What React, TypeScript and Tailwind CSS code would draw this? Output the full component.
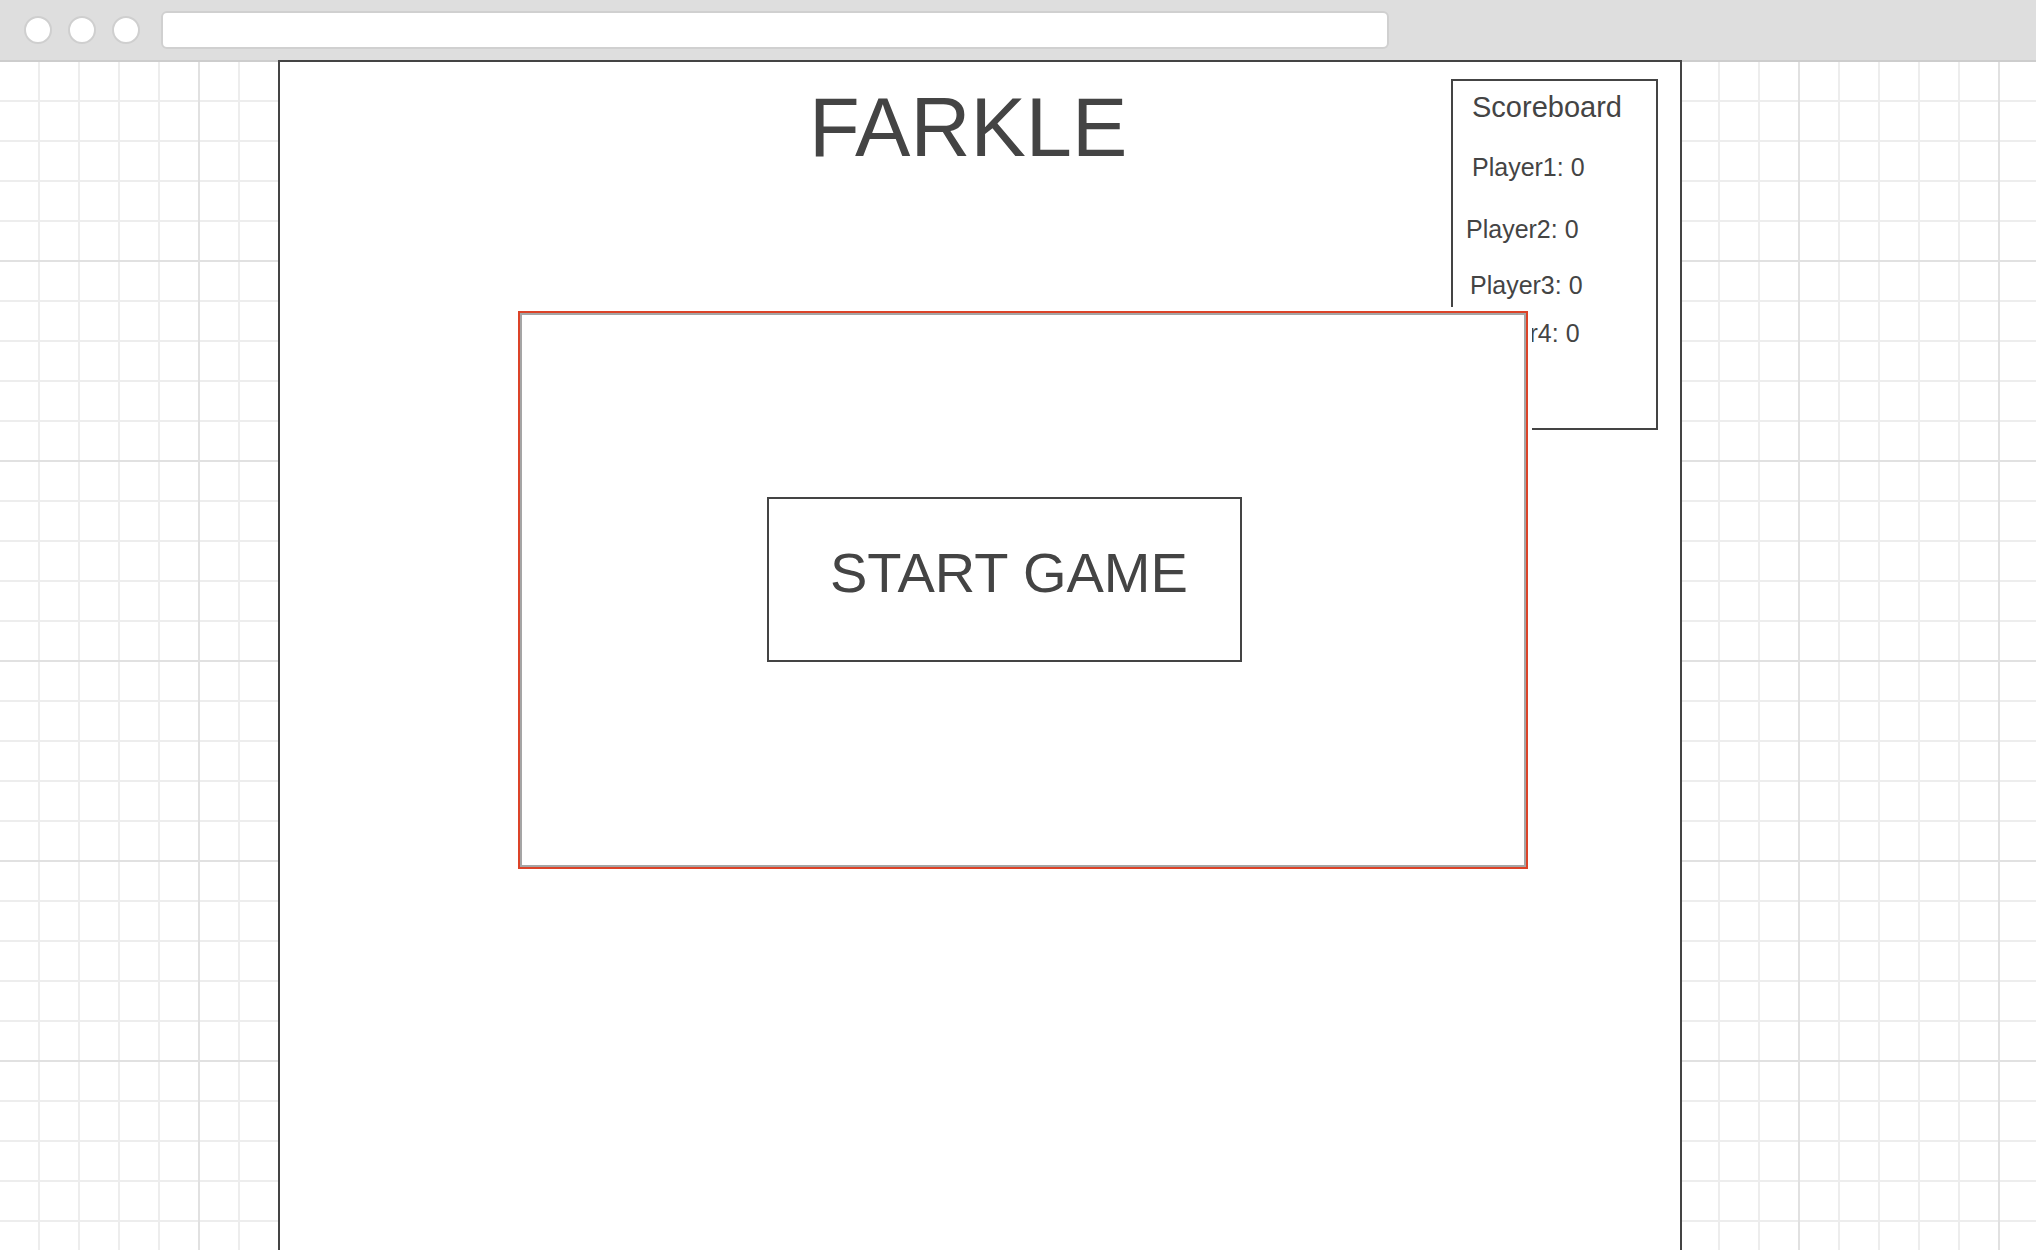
export default function App() {
  const players = [
    { name: "Player1", score: 0, cls: "mt-[33px] pl-[19px]" },
    { name: "Player2", score: 0, cls: "mt-[37px] pl-[13px]" },
    { name: "Player3", score: 0, cls: "mt-[31px] pl-[17px]" },
    { name: "Player4", score: 0, cls: "mt-[23px] pl-[14px]" },
  ];

  return (
    <div className="h-screen w-full overflow-hidden flex flex-col font-['Liberation_Sans',Arial,sans-serif] text-[#444]">
      {/* browser chrome */}
      <div className="h-[60px] shrink-0 flex items-center bg-[#dedede] pl-[24px]">
        <div className="flex gap-4">
          <div className="w-[28px] h-[28px] rounded-full bg-white border-2 border-[#cfcfcf]" />
          <div className="w-[28px] h-[28px] rounded-full bg-white border-2 border-[#cfcfcf]" />
          <div className="w-[28px] h-[28px] rounded-full bg-white border-2 border-[#cfcfcf]" />
        </div>
        <div className="ml-[21px] w-[1228px] h-[38px] rounded-md bg-white border-2 border-[#d0d0d0]" />
      </div>

      {/* grid canvas */}
      <div className="flex-1 flex border-t-2 border-[#cdcdcd] bg-white bg-[linear-gradient(to_right,transparent_198px,#e1e1e1_198px),linear-gradient(to_bottom,transparent_198px,#e1e1e1_198px),linear-gradient(to_right,transparent_38px,#ededed_38px),linear-gradient(to_bottom,transparent_38px,#ededed_38px)] bg-[length:200px_200px,200px_200px,40px_40px,40px_40px]">
        <div className="relative ml-[278px] -mt-[2px] w-[1404px] h-[1300px] shrink-0 border-2 border-[#444] bg-white pt-[24px]">
          <h1 className="ml-[529px] w-fit text-[83px] leading-none font-normal">FARKLE</h1>

          <div className="absolute left-[1171px] top-[17px] w-[207px] h-[351px] border-2 border-[#444] bg-white pt-[12px]">
            <div className="pl-[19px] text-[29px] leading-none">Scoreboard</div>
            {players.map((p) => (
              <div key={p.name} className={`text-[25px] leading-none ${p.cls}`}>
                {p.name}: {p.score}
              </div>
            ))}
          </div>

          <div className="relative z-10 ml-[238px] mt-[142px] w-[1010px] h-[558px] border-2 border-[#dc4328] bg-white shadow-[inset_0_0_0_2px_#a5a5a5,0_0_0_4px_#ffffff]">
            <div className="ml-[247px] mt-[184px] w-[475px] h-[165px] border-2 border-[#444] bg-white pl-[61px] pt-[46px] cursor-pointer">
              <span className="block text-[56px] leading-none">START GAME</span>
            </div>
          </div>
        </div>
      </div>
    </div>
  );
}
